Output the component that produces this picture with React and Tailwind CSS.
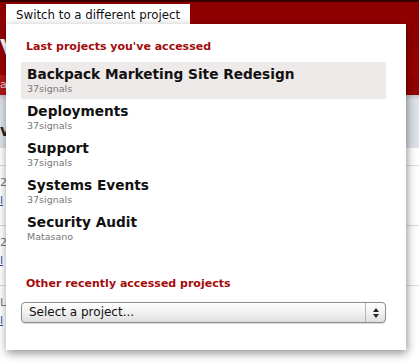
import React from 'react';

const recent = [
  { name: 'Backpack Marketing Site Redesign', account: '37signals', active: true },
  { name: 'Deployments', account: '37signals' },
  { name: 'Support', account: '37signals' },
  { name: 'Systems Events', account: '37signals' },
  { name: 'Security Audit', account: 'Matasano' },
];

const pageRows = ['2', '20', 'L'];

function ProjectSwitcher() {
  return (
    <div className="absolute left-[6px] top-[4px] font-['DejaVu_Sans',Verdana,sans-serif]">
      <div className="w-[184px] h-[20px] bg-white pl-[10px] pt-[3px] text-[11.8px] leading-[17px] text-[#111]">
        Switch to a different project
      </div>
      <div className="w-[400px] h-[326px] bg-white pl-[15px] pr-[20px] pt-[16px] shadow-[1px_3px_9px_rgba(0,0,0,0.45)]">
        <h2 className="pl-[5px] text-[11px] leading-[14px] font-bold text-[#a30b0b]">Last projects you've accessed</h2>
        <ul className="mt-[8px] flex flex-col">
          {recent.map((p) => (
            <li
              key={p.name}
              className={`h-[37px] px-[6px] pt-[4px] ${p.active ? 'bg-[#efeaea]' : ''}`}
            >
              <div className="text-[13.7px] leading-[16px] font-bold text-[#111]">{p.name}</div>
              <div className="text-[9.5px] leading-[13px] text-[#777]">{p.account}</div>
            </li>
          ))}
        </ul>
        <h2 className="mt-[30px] pl-[5px] text-[11px] leading-[14px] font-bold text-[#a30b0b]">Other recently accessed projects</h2>
        <div className="mt-[11px] h-[21px] flex rounded-[4px] border border-[#8c8c8c] bg-gradient-to-b from-white via-[#f1f1f1] to-[#dedede] shadow-[0_1px_1px_rgba(0,0,0,0.15)]">
          <div className="flex-1 pl-[7px] text-[12px] leading-[19px] text-[#111]">Select a project...</div>
          <div className="w-[20px] border-l border-[#b5b5b5] flex flex-col items-center justify-center gap-[2px]">
            <svg width="6" height="4" viewBox="0 0 6 4"><path d="M3 0L6 4H0Z" fill="#222" /></svg>
            <svg width="6" height="4" viewBox="0 0 6 4"><path d="M0 0H6L3 4Z" fill="#222" /></svg>
          </div>
        </div>
      </div>
    </div>
  );
}

export default function App() {
  return (
    <div className="relative w-[419px] h-[364px] overflow-hidden bg-white font-['DejaVu_Sans',Verdana,sans-serif]">
      <header className="h-[75px] border-t-2 border-[#3a0000] bg-gradient-to-b from-[#8c0000] to-[#9c0000] pt-[34px] text-[22px] leading-[24px] font-bold text-white">
        V
      </header>
      <nav className="h-[20px] bg-[#960000] flex">
        <span className="bg-[#b31616] pr-[10px] text-[11px] leading-[20px] text-[#f6d6d6]">a-</span>
      </nav>
      <div className="h-[5px] bg-gradient-to-b from-[#c9c9c9] to-[#dcdfe4]" />
      <div className="h-[48px] bg-[#dde2ea] pt-[22px] text-[15px] leading-[18px] font-bold text-[#222]">
        vi
      </div>
      <div className="pt-[17px]">
        {pageRows.map((r) => (
          <div key={r} className="h-[60px] border-t border-[#dcdcdc] pt-[10px] text-[11px]">
            <div className="leading-[14px] text-[#777]">{r}</div>
            <div className="mt-[4px] leading-[14px] text-[#1f4fa8] underline">l</div>
          </div>
        ))}
      </div>
      <ProjectSwitcher />
    </div>
  );
}
